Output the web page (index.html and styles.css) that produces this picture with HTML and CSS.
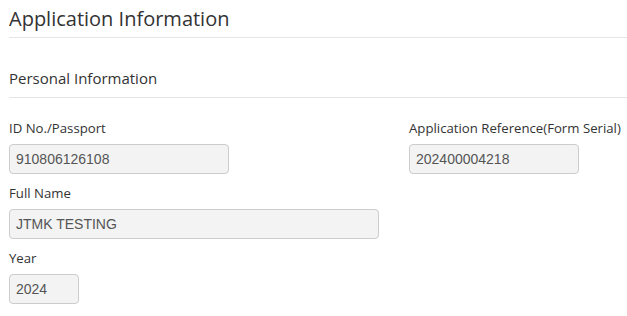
FILE: index.html
```html
<!DOCTYPE html>
<html lang="en">
<head>
    <meta charset="UTF-8">
    <title>Application Information</title>
    <link rel="stylesheet" href="styles.css">
</head>
<body>
    <h1 class="page-title">Application Information</h1>

    <h2 class="section-title">Personal Information</h2>

    <div class="form-row">
        <div class="field field-id">
            <label>ID No./Passport</label>
            <input type="text" value="910806126108" readonly>
        </div>
        <div class="field field-ref">
            <label>Application Reference(Form Serial)</label>
            <input type="text" value="202400004218" readonly>
        </div>
    </div>

    <div class="field field-name">
        <label>Full Name</label>
        <input type="text" value="JTMK TESTING" readonly>
    </div>

    <div class="field field-year">
        <label>Year</label>
        <input type="text" value="2024" readonly>
    </div>
</body>
</html>
```

FILE: styles.css
```css
* {
    margin: 0;
    padding: 0;
    box-sizing: border-box;
}

body {
    background: #fff;
    color: #333;
    font-family: "Open Sans", "Noto Sans", sans-serif;
    padding-left: 9px;
}

.page-title {
    font-size: 20px;
    font-weight: normal;
    line-height: 27px;
    padding-top: 5px;
    height: 38px;
    border-bottom: 1px solid #e5e5e5;
}

.section-title {
    font-size: 15px;
    font-weight: normal;
    line-height: 20px;
    padding-top: 30px;
    height: 60px;
    border-bottom: 1px solid #e5e5e5;
}

.form-row {
    display: flex;
}

.field {
    display: flex;
    flex-direction: column;
}

.field label {
    font-size: 13.2px;
    line-height: 20px;
    margin-bottom: 6px;
}

.field input {
    font-family: "Liberation Sans", Arial, sans-serif;
    font-size: 14px;
    color: #555;
    background: #f3f3f3;
    border: 1px solid #ccc;
    border-radius: 4px;
    height: 30px;
    padding: 0 6px;
}

.field-id {
    width: 400px;
    padding-top: 20px;
}

.field-id input {
    width: 220px;
}

.field-ref {
    padding-top: 20px;
}

.field-ref input {
    width: 170px;
}

.field-name,
.field-year {
    padding-top: 9px;
}

.field-name input {
    width: 370px;
}

.field-year input {
    width: 70px;
}
```
